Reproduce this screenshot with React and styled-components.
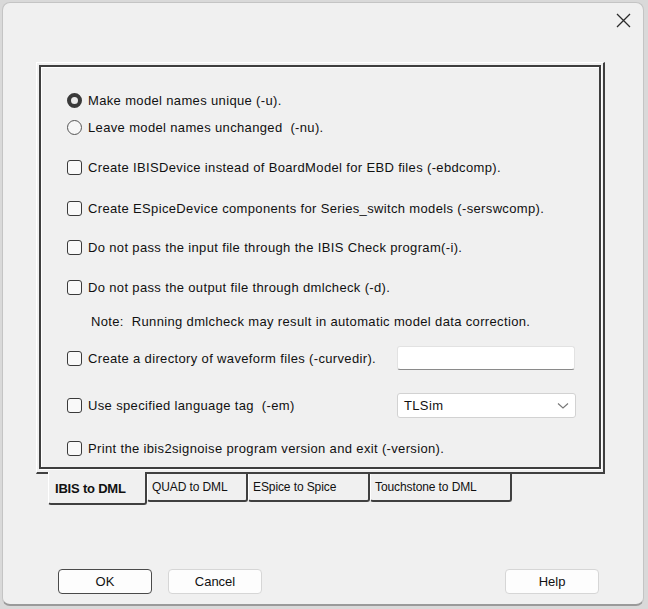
import React from "react";
import styled, { createGlobalStyle } from "styled-components";

const Global = createGlobalStyle`
  html, body { margin: 0; padding: 0; }
  body {
    background: #d9d9d9;
    font-family: "Liberation Sans", Arial, sans-serif;
    width: 648px;
    height: 609px;
    overflow: hidden;
  }
`;

const Page = styled.div`
  padding: 2px 3px 2px 2px;
  width: 648px;
  height: 609px;
  box-sizing: border-box;
`;

const Dialog = styled.div`
  width: 642px;
  height: 604px;
  box-sizing: border-box;
  background: #f0f0f0;
  border: 1px solid #c4c4c4;
  border-bottom: 2px solid #9a9a9a;
  border-radius: 8px;
  display: flex;
  flex-direction: column;
`;

const TitleBar = styled.div`
  height: 34px;
  display: flex;
  justify-content: flex-end;
  align-items: flex-start;
  padding: 7px 10px 0 0;
  box-sizing: border-box;
`;

const CloseButton = styled.button`
  width: 20px;
  height: 20px;
  padding: 0;
  border: none;
  background: transparent;
  display: flex;
  align-items: center;
  justify-content: center;
`;

const Body = styled.div`
  padding: 25px 0 0 33px;
`;

const TabControl = styled.div`
  width: 569px;
  display: flex;
  flex-direction: column;
`;

const PageFrame = styled.div`
  box-sizing: border-box;
  height: 412px;
  border-top: 1px solid #ffffff;
  border-left: 1px solid #ffffff;
  border-right: 2px solid #404040;
  border-bottom: 2px solid #404040;
  padding: 2px 2px 3px 2px;
  display: flex;
`;

const InnerBox = styled.div`
  flex: 1;
  border: 2px solid #3e3e3e;
  box-shadow: 1px 1px 0 #ffffff, inset 1px 1px 0 #ffffff;
  padding: 21px 0 0 26px;
  display: flex;
  flex-direction: column;
`;

const Row = styled.div`
  display: flex;
  align-items: center;
  min-height: 24px;
  margin-top: ${(p) => p.$top || 0}px;
  padding-left: ${(p) => p.$indent || 0}px;
`;

const FieldRow = styled.div`
  display: grid;
  grid-template-columns: 330px 179px;
  align-items: center;
  min-height: 24px;
  margin-top: ${(p) => p.$top || 0}px;
`;

const Choice = styled.label`
  display: flex;
  align-items: center;
  gap: 6px;
`;

const Label = styled.span`
  font-size: 13px;
  letter-spacing: 0.35px;
  color: #111;
  white-space: nowrap;
`;

const Box = styled.span`
  width: 13px;
  height: 13px;
  border: 1px solid #3a3a3a;
  border-radius: 3px;
  background: #f9f9f9;
  flex: none;
`;

const Radio = styled.span`
  width: 15px;
  height: 15px;
  box-sizing: border-box;
  border-radius: 50%;
  flex: none;
  border: ${(p) => (p.$on ? "4px solid #3a3a3a" : "1px solid #555")};
  background: ${(p) => (p.$on ? "#eaeaea" : "#f7f7f7")};
`;

const TextInput = styled.div`
  height: 24px;
  box-sizing: border-box;
  background: #ffffff;
  border: 1px solid #e2e2e2;
  border-bottom: 1px solid #8a8a8a;
  border-radius: 3px;
  width: 178px;
`;

const Select = styled.div`
  height: 25px;
  box-sizing: border-box;
  background: #ffffff;
  border: 1px solid #d2d2d2;
  border-radius: 3px;
  display: flex;
  align-items: center;
  justify-content: space-between;
  padding: 0 6px 0 6px;
  font-size: 13px;
  letter-spacing: 0.35px;
  color: #111;
`;

const TabStrip = styled.div`
  display: flex;
  align-items: flex-start;
  margin: -2px 0 0 12px;
`;

const Tab = styled.div`
  box-sizing: border-box;
  background: #f0f0f0;
  border-left: 1px solid #ffffff;
  border-right: 2px solid #404040;
  border-bottom: 2px solid #404040;
  border-radius: 0 0 3px 3px;
  width: ${(p) => p.$w}px;
  height: ${(p) => (p.$active ? 33 : 28)}px;
  margin-top: ${(p) => (p.$active ? 0 : 2)}px;
  padding: ${(p) => (p.$active ? "9px 0 0 6px" : "6px 0 0 4px")};
  font-size: ${(p) => (p.$active ? 13 : 12)}px;
  font-weight: ${(p) => (p.$active ? 700 : 400)};
  letter-spacing: ${(p) => (p.$active ? "-0.2px" : "-0.1px")};
  color: #111;
  white-space: nowrap;
  position: relative;
  z-index: ${(p) => (p.$active ? 1 : 0)};
`;

const ButtonRow = styled.div`
  margin-top: auto;
  display: flex;
  align-items: center;
  padding: 0 44px 10px 55px;
  gap: 16px;
`;

const Button = styled.button`
  width: 94px;
  height: 25px;
  box-sizing: border-box;
  background: #fdfdfd;
  border: 1px solid ${(p) => (p.$default ? "#4a4a4a" : "#d6d6d6")};
  border-radius: 4px;
  font-family: "Liberation Sans", Arial, sans-serif;
  font-size: 13px;
  color: #111;
  padding: 0;
  margin-left: ${(p) => (p.$push ? "auto" : "0")};
`;

const checks = [
  { top: 16, text: "Create IBISDevice instead of BoardModel for EBD files (-ebdcomp)." },
  { top: 17, text: "Create ESpiceDevice components for Series_switch models (-serswcomp)." },
  { top: 15, text: "Do not pass the input file through the IBIS Check program(-i)." },
  { top: 16, text: "Do not pass the output file through dmlcheck (-d)." },
];

const tabs = [
  { label: "IBIS to DML", w: 99, active: true },
  { label: "QUAD to DML", w: 101 },
  { label: "ESpice to Spice", w: 122 },
  { label: "Touchstone to DML", w: 142 },
];

export default function App() {
  return (
    <Page>
      <Global />
      <Dialog>
        <TitleBar>
          <CloseButton aria-label="Close">
            <svg width="15" height="15" viewBox="0 0 15 15">
              <path d="M1 1 L14 14 M14 1 L1 14" stroke="#2b2b2b" strokeWidth="1.3" />
            </svg>
          </CloseButton>
        </TitleBar>
        <Body>
          <TabControl>
            <PageFrame>
              <InnerBox>
                <Row>
                  <Choice>
                    <Radio $on />
                    <Label>Make model names unique (-u).</Label>
                  </Choice>
                </Row>
                <Row $top={3}>
                  <Choice>
                    <Radio />
                    <Label>Leave model names unchanged&nbsp; (-nu).</Label>
                  </Choice>
                </Row>
                {checks.map((c) => (
                  <Row key={c.text} $top={c.top}>
                    <Choice>
                      <Box />
                      <Label>{c.text}</Label>
                    </Choice>
                  </Row>
                ))}
                <Row $top={10} $indent={24}>
                  <Label>Note:&nbsp; Running dmlcheck may result in automatic model data correction.</Label>
                </Row>
                <FieldRow $top={13}>
                  <Choice>
                    <Box />
                    <Label>Create a directory of waveform files (-curvedir).</Label>
                  </Choice>
                  <TextInput />
                </FieldRow>
                <FieldRow $top={23}>
                  <Choice>
                    <Box />
                    <Label>Use specified language tag&nbsp; (-em)</Label>
                  </Choice>
                  <Select>
                    <span>TLSim</span>
                    <svg width="12" height="8" viewBox="0 0 12 8">
                      <path d="M1 1.5 L6 6 L11 1.5" fill="none" stroke="#777" strokeWidth="1.1" />
                    </svg>
                  </Select>
                </FieldRow>
                <Row $top={18}>
                  <Choice>
                    <Box />
                    <Label>Print the ibis2signoise program version and exit (-version).</Label>
                  </Choice>
                </Row>
              </InnerBox>
            </PageFrame>
            <TabStrip>
              {tabs.map((t) => (
                <Tab key={t.label} $w={t.w} $active={t.active}>
                  {t.label}
                </Tab>
              ))}
            </TabStrip>
          </TabControl>
        </Body>
        <ButtonRow>
          <Button $default>OK</Button>
          <Button>Cancel</Button>
          <Button $push>Help</Button>
        </ButtonRow>
      </Dialog>
    </Page>
  );
}
